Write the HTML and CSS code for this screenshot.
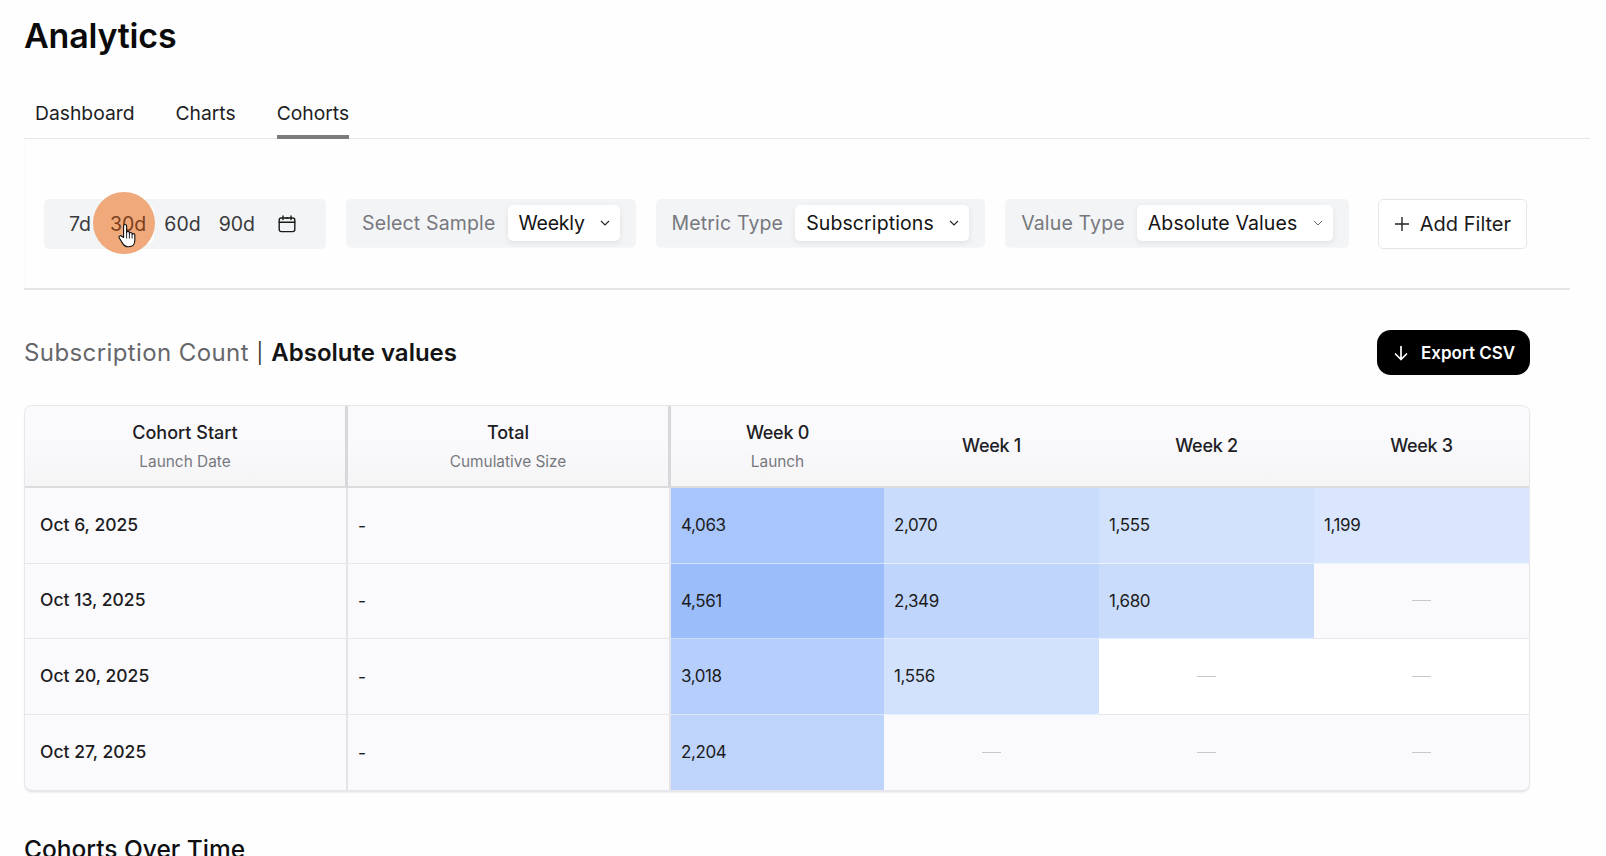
FILE: index.html
```html
<!DOCTYPE html>
<html lang="en">
<head>
<meta charset="utf-8">
<title>Analytics</title>
<link rel="stylesheet" href="styles.css">
</head>
<body>
<main class="page">
  <h1 class="title">Analytics</h1>
  <nav class="tabs">
    <a class="tab">Dashboard</a>
    <a class="tab">Charts</a>
    <a class="tab tab-active">Cohorts</a>
  </nav>

  <section class="filters">
    <div class="range">
      <span class="range-pill"></span>
      <span class="click-dot"></span>
      <span class="range-item range-7">7d</span>
      <span class="range-item range-30">30d</span>
      <span class="range-item range-60">60d</span>
      <span class="range-item range-90">90d</span>
      <svg class="calendar" viewBox="0 0 18 18" fill="none" stroke="#1a1a1a" stroke-width="1.4" stroke-linecap="round" stroke-linejoin="round"><rect x="1.2" y="3" width="15.6" height="13.6" rx="2"/><path d="M1.2 7.2h15.6M5 1v3.6M13 1v3.6M8 3h2"/></svg>
      <svg class="hand" viewBox="0 0 18 25"><path d="M5.6 14.5V3.2c0-2.2 3-2.2 3 0v6.6c0-1.9 2.8-1.9 2.8 0v1c0-1.8 2.7-1.8 2.7 0v1c0-1.7 2.7-1.6 2.7.2v5.6c0 3.4-2 6.2-5.6 6.2H9.600c-2.400 0-3.600-1.200-4.800-3.200L1.300 15c-1-1.900 1.400-3.200 2.700-1.500z" fill="#fff" stroke="#111" stroke-width="1.1" stroke-linejoin="round"/><path d="M8.600 10v5.500M11.400 10.800v4.700M14.100 11.800v3.700" fill="none" stroke="#111" stroke-width=".9"/></svg>
    </div>

    <div class="select-group">
      <span class="select-label">Select Sample</span>
      <span class="select-pill select-weekly">Weekly
        <svg class="chev" viewBox="0 0 10 6" fill="none" stroke="#222" stroke-width="1.1"><path d="M1 1l4 4 4-4"/></svg>
      </span>
    </div>
    <div class="select-group">
      <span class="select-label">Metric Type</span>
      <span class="select-pill select-metric">Subscriptions
        <svg class="chev" viewBox="0 0 10 6" fill="none" stroke="#222" stroke-width="1.1"><path d="M1 1l4 4 4-4"/></svg>
      </span>
    </div>
    <div class="select-group">
      <span class="select-label">Value Type</span>
      <span class="select-pill select-value">Absolute Values
        <svg class="chev" viewBox="0 0 10 6" fill="none" stroke="#666" stroke-width="1"><path d="M1 1l4 4 4-4"/></svg>
      </span>
    </div>
    <button class="add-filter">
      <svg class="plus" viewBox="0 0 16 16" fill="none" stroke="#222" stroke-width="1.4"><path d="M8 1v14M1 8h14"/></svg>
      Add Filter
    </button>
  </section>

  <header class="section-head">
    <h2 class="section-title">Subscription Count <span class="pipe">|</span> <strong class="section-strong">Absolute values</strong></h2>
    <button class="export">
      <svg class="arrow" viewBox="0 0 16 16" fill="none" stroke="#fff" stroke-width="1.7" stroke-linecap="round" stroke-linejoin="round"><path d="M8 1.500v13M2.500 9l5.500 5.500L13.500 9"/></svg>
      Export CSV
    </button>
  </header>

  <div class="table-card">
    <div class="grid">
      <div class="th th-strong"><span class="th-main">Cohort Start</span><span class="th-sub">Launch Date</span></div>
      <div class="th th-strong"><span class="th-main">Total</span><span class="th-sub">Cumulative Size</span></div>
      <div class="th"><span class="th-main th-week">Week 0</span><span class="th-sub">Launch</span></div>
      <div class="th th-solo"><span class="th-main th-week">Week 1</span></div>
      <div class="th th-solo"><span class="th-main th-week">Week 2</span></div>
      <div class="th th-solo"><span class="th-main th-week">Week 3</span></div>

      <div class="td td-date">Oct 6, 2025</div>
      <div class="td td-total">-</div>
      <div class="td td-val" style="background:#a8c6fb">4,063</div>
      <div class="td td-val" style="background:#c9dcfb">2,070</div>
      <div class="td td-val" style="background:#d2e2fc">1,555</div>
      <div class="td td-val" style="background:#d9e6fd">1,199</div>

      <div class="td td-date">Oct 13, 2025</div>
      <div class="td td-total">-</div>
      <div class="td td-val" style="background:#9bbdfa">4,561</div>
      <div class="td td-val" style="background:#c0d5fc">2,349</div>
      <div class="td td-val" style="background:#cadcfb">1,680</div>
      <div class="td td-empty"><i class="dash"></i></div>

      <div class="td td-date">Oct 20, 2025</div>
      <div class="td td-total">-</div>
      <div class="td td-val" style="background:#b6cefb">3,018</div>
      <div class="td td-val" style="background:#d2e2fc">1,556</div>
      <div class="td td-empty td-white"><i class="dash"></i></div>
      <div class="td td-empty td-white"><i class="dash"></i></div>

      <div class="td td-date td-last">Oct 27, 2025</div>
      <div class="td td-total td-last">-</div>
      <div class="td td-val td-last" style="background:#bfd4fb">2,204</div>
      <div class="td td-empty td-last"><i class="dash"></i></div>
      <div class="td td-empty td-last"><i class="dash"></i></div>
      <div class="td td-empty td-last"><i class="dash"></i></div>
    </div>
  </div>

  <h2 class="over-time">Cohorts Over Time</h2>
</main>
</body>
</html>
```
FILE: styles.css
```css
* { box-sizing: border-box; }
html, body { margin: 0; height: 100%; overflow: hidden; background: #fefefe; }
body { font-family: Inter, "Noto Sans", sans-serif; color: #111; }

.page { padding: 18px 0 0 24px; width: 1606px; }

.title { margin: 0; font-size: 34px; line-height: 36px; font-weight: 600; letter-spacing: -0.2px; color: #0a0a0a; }

.tabs { display: flex; gap: 41px; margin: 38px 16px 0 0; padding-left: 11px; height: 47px; border-bottom: 1px solid #e8e8ea; }
.tab { font-size: 19.3px; line-height: 42px; height: 47px; color: #1d1d1f; border-bottom: 4px solid transparent; }
.tab-active { border-bottom-color: #7b7b7d; }

.filters { display: flex; align-items: flex-start; gap: 20px; width: 1546px; height: 151px; padding: 60px 0 0 20px; border-bottom: 2px solid #e6e6e8; box-shadow: inset 1px 0 0 #fafafa; }

.range { position: relative; display: flex; align-items: center; width: 282px; height: 50px; padding-left: 25px; background: #f3f4f6; border-radius: 5px; font-size: 19.5px; color: #3a3a3e; }
.range-pill { position: absolute; left: 58px; top: 6px; width: 52px; height: 38px; background: #fff; border-radius: 5px; }
.click-dot { position: absolute; z-index: 1; left: 49px; top: -7px; width: 62px; height: 62px; border-radius: 50%; background: #efa97a; }
.range-item { position: relative; z-index: 2; }
.range-7 { margin-right: 19px; }
.range-30 { margin-right: 18px; color: #7a3f1c; }
.range-60 { margin-right: 18px; }
.range-90 { margin-right: 23px; }
.calendar { width: 18px; height: 18px; }
.hand { position: absolute; z-index: 3; left: 74px; top: 24px; width: 18px; height: 25px; }

.select-group { display: flex; align-items: center; height: 48px; padding: 0 16px; background: #f3f4f6; border-radius: 5px; font-size: 19.5px; box-shadow: 0 1px 1px rgba(0,0,0,.03); }
.select-label { color: #77787e; margin-right: 12px; white-space: nowrap; letter-spacing: .15px; }
.select-pill { display: flex; align-items: center; justify-content: space-between; height: 36px; padding: 0 10px 0 11px; background: #fff; border-radius: 5px; color: #141414; box-shadow: 0 2px 6px rgba(0,0,0,.08); white-space: nowrap; letter-spacing: .1px; }
.select-weekly { width: 112px; letter-spacing: -.2px; }
.select-metric { width: 174px; }
.select-value { width: 196px; }
.chev { width: 10px; height: 6px; margin-left: 4px; }

.add-filter { display: flex; align-items: center; gap: 10px; height: 50px; width: 149px; margin-left: 9px; padding: 0 0 0 15px; background: #fff; border: 1px solid #e6e6e8; border-radius: 5px; font: inherit; font-size: 20px; color: #1a1a1a; white-space: nowrap; }
.plus { width: 16px; height: 16px; }

.section-head { display: flex; align-items: center; justify-content: space-between; width: 1506px; height: 45px; margin-top: 40px; }
.section-title { margin: 0; font-size: 24px; font-weight: 400; color: #66676c; letter-spacing: .4px; }
.pipe { font-size: 20px; margin: 0 .5px; vertical-align: 1px; color: #333; }
.section-strong { font-weight: 600; color: #141414; letter-spacing: 0; }
.export { display: flex; align-items: center; gap: 12px; width: 153px; height: 45px; padding: 0 0 0 16px; background: #000; color: #fff; border: 0; border-radius: 14px; font: inherit; font-size: 17px; font-weight: 600; }
.arrow { width: 16px; height: 16px; }

.table-card { width: 1506px; height: 387px; margin-top: 30px; border: 1px solid #e8e8ec; border-bottom-width: 2px; border-radius: 8px; overflow: hidden; background: #fafafd; box-shadow: 0 1px 2px rgba(0,0,0,.06); }
.grid { display: grid; grid-template-columns: 323px 323px 213px 215px 215px 1fr; grid-template-rows: 82px repeat(4, 75.5px); }

.th { display: flex; flex-direction: column; align-items: center; justify-content: center; gap: 9px; padding-top: 1px; background: linear-gradient(#fafafd 40%, #f5f5f6); border-bottom: 2px solid #dcdce0; }
.th-strong { border-right: 3px solid #d8d8dc; }
.th-solo { padding: 0 0 1px; }
.th-main { font-size: 18px; font-weight: 500; line-height: 22px; color: #202024; }
.th-week { letter-spacing: -.3px; }
.th-sub { font-size: 15.4px; line-height: 18px; color: #77787e; }

.td { display: flex; align-items: center; font-size: 17.5px; border-bottom: 1px solid #e7e7eb; color: #1c1c22; }
.td-last { border-bottom: 0; }
.td-date { padding: 0 0 2px 15px; font-weight: 500; border-right: 2px solid #e4e4e8; }
.td-total { padding-left: 10px; border-right: 2px solid #e4e4e8; }
.td-val { padding-left: 10px; font-size: 17px; letter-spacing: -.4px; border-bottom-color: rgba(255,255,255,.5); }
.td-empty { justify-content: center; }
.td-white { background: #fff; }
.dash { display: block; width: 19px; height: 1px; background: #c8c8cc; }

.over-time { margin: 42px 0 0; font-size: 24.5px; line-height: 30px; font-weight: 500; color: #0f0f12; }
```
